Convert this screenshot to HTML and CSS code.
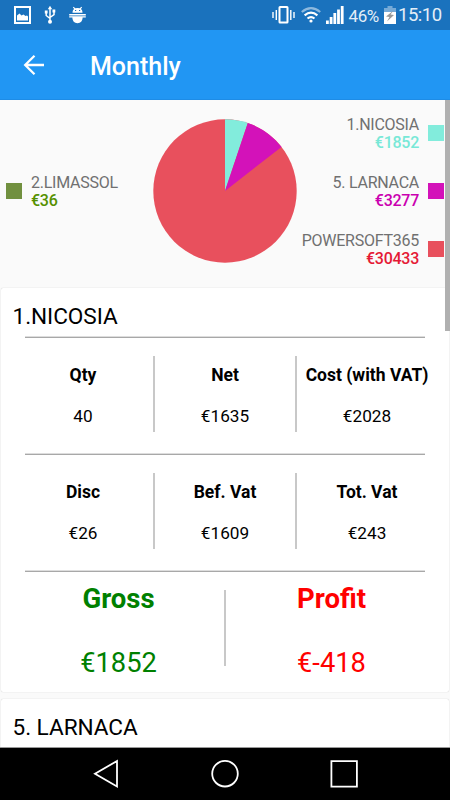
FILE: index.html
```html
<!DOCTYPE html>
<html lang="en">
<head>
<meta charset="utf-8">
<title>Monthly</title>
<link rel="stylesheet" href="styles.css">
</head>
<body>
<div class="screen">
  <header class="status">
    <svg class="status-left" width="90" height="30" viewBox="0 0 90 30">
      <path fill="#fff" fill-rule="evenodd" d="M14 6h17v18H14zM16 8v14h13V8z"/>
      <path fill="#fff" d="M17 20.500v-5l2.500-2 2 2 2-1 2 1.500 1.500-.5 1 1v4z"/>
      <g fill="none" stroke="#fff" stroke-width="1.500"><path d="M50 8v14M46.200 12v3.500l3.800 3M54 11v3.500l-4 3"/></g>
      <path fill="#fff" d="M50 5.800l2.200 3.400h-4.400zM44.800 10.500h2.800v3h-2.800zM52.500 9.500h2.800v3h-2.800z"/><circle cx="50" cy="21.700" r="2" fill="#fff"/>
      <path fill="#fff" d="M72.500 12.700c0-2 .8-3 1.700-3.700l-1.300-1.600.8-.6 1.500 1.500a7 7 0 0 1 4.600 0l1.500-1.500.8.600L80.800 9c1 .7 1.700 1.700 1.700 3.700zM69.200 14h16.600v1.500H69.200zM69.200 16.300h16.600v1.200h-3.200c0 3.500-2 5.700-5.100 5.700s-5.100-2.200-5.100-5.700h-3.200z"/>
      <path stroke="#1a72bd" d="M75 10.500h1.200M79 10.500h1.200"/>
    </svg>
    <div class="status-right">
      <svg width="88" height="30" viewBox="0 0 88 30">
        <rect x="19.500" y="7" width="8" height="15.500" rx=".5" fill="none" stroke="#fff" stroke-width="2"/>
        <path stroke="#fff" stroke-width="1.400" d="M16.300 10v10M13 12v6M30.800 10v10M34 12v6"/>
        <g fill="none" stroke="#fff" stroke-width="2.200"><path opacity=".5" d="M41.800 12q9.200-7.800 18.400 0"/><path d="M44.600 15.300q6.400-5.300 12.800 0M47.500 18.500q3.500-2.700 7 0"/></g>
        <circle cx="51" cy="21" r="1.600" fill="#fff"/>
        <path fill="#fff" d="M66 20.500h2.800V24H66zM69.700 17h2.800v7h-2.800zM73.400 13h2.800v11h-2.800zM77.100 9.500h2.800V24h-2.800zM80.800 6h2.800v18h-2.800z"/>
      </svg>
      <span class="battery-text">46%</span>
      <svg width="12" height="30" viewBox="0 0 12 30"><path fill="#76aad7" d="M3.500 6h5v2H12v5H0V8h3.500z"/><path fill="#fff" d="M0 12h12v12H0z"/><path fill="#999" d="M9.500 10.500L2 16.500l3.500.5L3 21.500l7-6.500-3.500-.5z"/></svg>
      <span class="clock">15:10</span>
    </div>
  </header>
  <div class="appbar">
    <svg width="22" height="22" viewBox="0 0 22 22" fill="none" stroke="#fff" stroke-width="2.300"><path d="M21 11H2.500M11.500 1.800L2.200 11l9.300 9.200"/></svg>
    <h1>Monthly</h1>
  </div>
  <main class="content">
    <section class="chart">
      <div class="legend left">
        <div class="entry"><i class="swatch olive"></i><div>2.LIMASSOL<b class="c-olive">€36</b></div></div>
      </div>
      <svg class="pie" width="144" height="144" viewBox="-72 -72 144 144">
        <circle r="71.700" fill="#e8505d"/>
        <path fill="#82ecdc" d="M0 0V-71.700A71.700 71.700 0 0 1 22.800-68z"/>
        <path fill="#d312b9" d="M0 0L22.800-68A71.700 71.700 0 0 1 56.500-44.100z"/>
      </svg>
      <div class="legend right">
        <div class="entry"><div>1.NICOSIA<b class="c-aqua">€1852</b></div><i class="swatch aqua"></i></div>
        <div class="entry"><div>5. LARNACA<b class="c-magenta">€3277</b></div><i class="swatch magenta"></i></div>
        <div class="entry"><div>POWERSOFT365<b class="c-red">€30433</b></div><i class="swatch red"></i></div>
      </div>
    </section>
    <section class="card">
      <h2>1.NICOSIA</h2>
      <div class="row">
        <div class="cell"><b>Qty</b><span>40</span></div>
        <div class="cell"><b>Net</b><span>€1635</span></div>
        <div class="cell"><b>Cost (with VAT)</b><span>€2028</span></div>
      </div>
      <div class="row">
        <div class="cell"><b>Disc</b><span>€26</span></div>
        <div class="cell"><b>Bef. Vat</b><span>€1609</span></div>
        <div class="cell"><b>Tot. Vat</b><span>€243</span></div>
      </div>
      <div class="row totals">
        <div class="cell gross"><b>Gross</b><span>€1852</span></div>
        <div class="cell profit"><b>Profit</b><span>€-418</span></div>
      </div>
    </section>
    <section class="card next"><h2>5. LARNACA</h2></section>
    <div class="scrollbar"></div>
  </main>
  <nav class="navbar">
    <svg width="450" height="52" viewBox="0 0 450 52" fill="none" stroke="#fff" stroke-width="1.800"><path d="M117 13v25.500L95 25.700z"/><circle cx="225" cy="25.700" r="12.800"/><path d="M331.400 13.200h25.500v25.400h-25.500z"/></svg>
  </nav>
</div>
</body>
</html>
```

FILE: styles.css
```css
* { box-sizing: border-box; }
body { margin: 0; font-family: Roboto, "Liberation Sans", sans-serif; color: #000; }
svg { display: block; flex: none; }
h1, h2 { margin: 0; }
.screen { width: 450px; height: 800px; display: flex; flex-direction: column; overflow: hidden; background: #fafafa; }
.status { height: 30px; flex: none; background: #1a72bd; display: flex; justify-content: space-between; color: #fff; }
.status-right { display: flex; align-items: center; padding-right: 8px; line-height: 30px; white-space: nowrap; }
.battery-text { width: 36px; font-size: 17px; letter-spacing: -.4px; padding-top: 1px; padding-left: .5px; color: #e4eef7; }
.clock { width: 46px; padding-left: 2px; font-size: 18.500px; letter-spacing: -.5px; color: #e4eef7; }
.appbar { height: 70px; flex: none; background: #2196f3; display: flex; align-items: center; padding-left: 23px; gap: 45px; color: #fff; border-bottom: 1px solid #1e8ce6; }
.appbar h1 { font-size: 25px; font-weight: 500; line-height: 30px; padding-top: 4px; }
.content { position: relative; height: 648px; flex: none; overflow: hidden; border-bottom: 1px solid #999; }
.chart { height: 188px; display: grid; grid-template-columns: 153px 144px 153px; color: #707070; font-size: 16px; letter-spacing: -.25px; line-height: 18px; }
.pie { margin-top: 18.500px; }
.legend { display: flex; flex-direction: column; padding-top: 15px; }
.legend.left { padding: 73px 0 0 6px; }
.legend.right { padding-right: 6px; align-items: flex-end; gap: 22px; text-align: right; }
.entry { display: flex; align-items: center; gap: 9px; white-space: nowrap; height: 36px; }
.entry > div { padding-top: 1px; }
.entry b { display: block; font-weight: 500; }
.swatch { width: 16px; height: 16px; margin-top: -1px; }
.olive { background: #71903f; }
.aqua { background: #82ecdc; }
.magenta { background: #d312b9; }
.red { background: #e8505d; }
.c-olive { color: #559000; }
.c-aqua { color: #78e8d7; }
.c-magenta { color: #ca00b0; }
.c-red { color: #e51935; }
.card { height: 404px; margin: 0 1px; background: #fff; border-radius: 2px; box-shadow: 0 0 1px #bbb; }
.card h2 { height: 48px; padding: 4px 0 0 11.500px; font-size: 22.600px; line-height: 50px; font-weight: 400; letter-spacing: -.05px; }
.next { margin-top: 7px; }
.row { height: 117px; margin: 0 11px; display: flex; background: linear-gradient(#a8a8a8, #a8a8a8) 13px 1px / 400px 1px no-repeat, linear-gradient(#ddd, #ddd) 13px 0 / 400px 1px no-repeat; }
.cell { position: relative; flex: 1 1 0; height: 76px; margin-top: 20px; display: flex; flex-direction: column; align-items: center; font-size: 17.200px; white-space: nowrap; }
.cell + .cell::before { content: ""; position: absolute; left: -1px; top: 0; width: 2px; height: 76px; background: #c8c8c8; }
.cell b { line-height: 20px; margin-top: 9px; font-size: 17.500px; font-weight: 700; }
.cell span { line-height: 20px; margin-top: 21px; }
.totals .cell { font-size: 27.300px; }
.totals .cell b { line-height: 28px; margin-top: -5px; font-size: 27.500px; }
.totals .cell span { line-height: 30px; margin-top: 35px; }
.gross { color: #008000; }
.profit { color: #f00; }
.scrollbar { position: absolute; right: 0; top: 0; width: 5px; height: 231px; background: #b0b0b0; }
.navbar { height: 52px; flex: none; background: #000; }
```
